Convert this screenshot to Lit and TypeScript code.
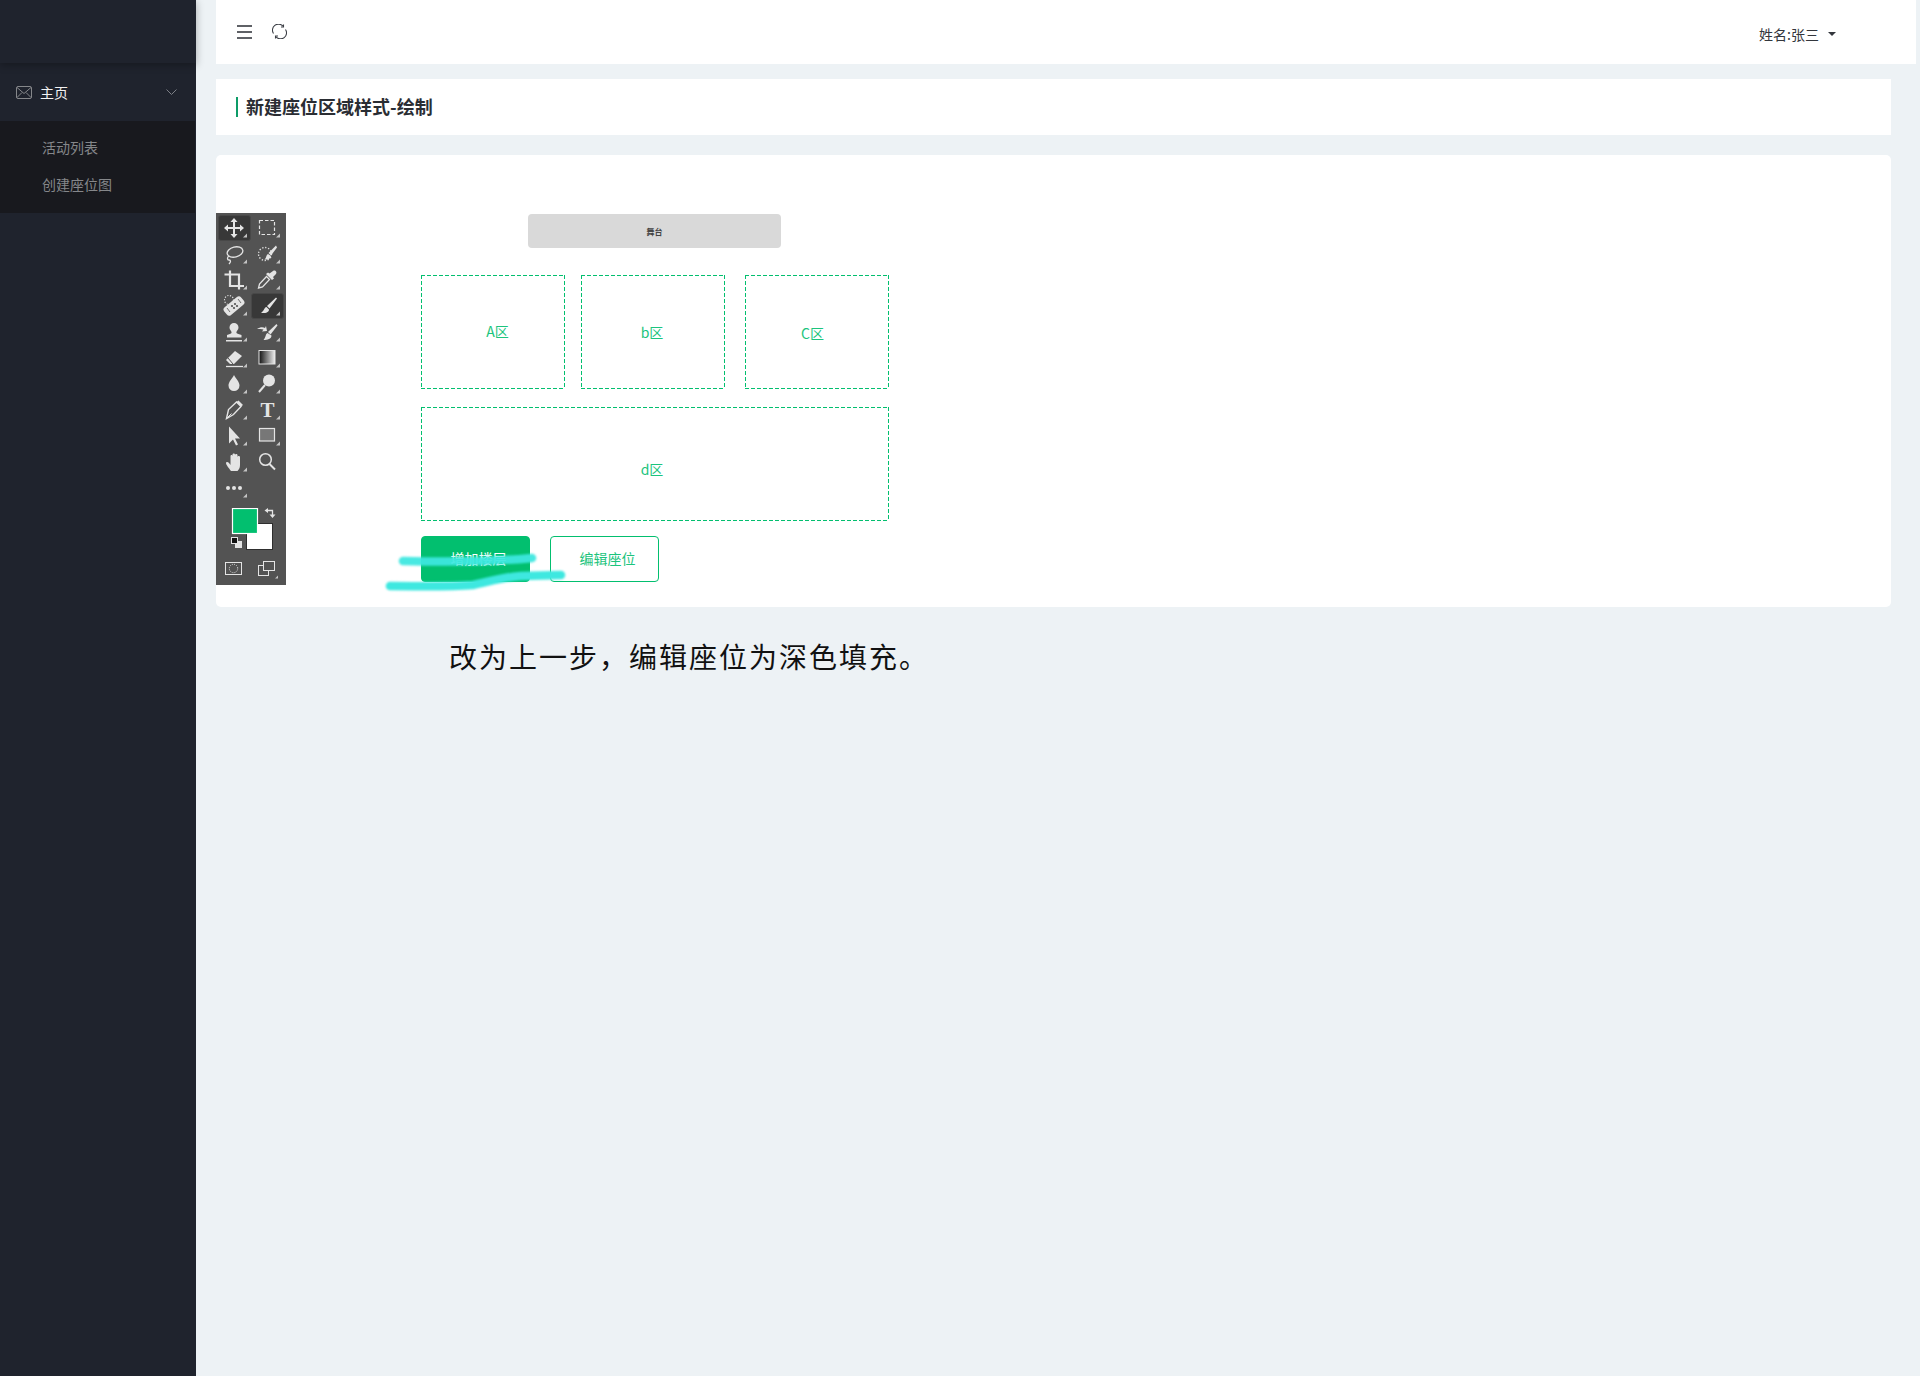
import { LitElement, html, css, svg } from 'lit';
import { customElement } from 'lit/decorators.js';

const INK = '#e4e4e4';
const corner = svg`<path d="M29 18.500v4h-4z" fill="#c4c4c4"/>`;

// tool icons, drawn in a 33x26 cell with the icon centred on 16,13
const tools = [
  { active: true, icon: svg`<path d="M16 5v16M8 13h16" stroke=${INK} stroke-width="2"/><path d="M16 3l3.500 4h-7zM16 23l3.500-4h-7zM6 13l4-3.500v7zM26 13l-4-3.500v7z" fill=${INK}/>${corner}` },
  { icon: svg`<rect x="8.500" y="5.500" width="15" height="14" fill="none" stroke=${INK} stroke-width="1.200" stroke-dasharray="3.500 2"/>${corner}` },
  { icon: svg`<ellipse cx="17" cy="11" rx="8" ry="5" transform="rotate(-14 17 11)" fill="none" stroke=${INK} stroke-width="1.300"/><path d="M11 15c-2 1-2 4 0 4s2 2 0 4" fill="none" stroke=${INK} stroke-width="1.300"/>${corner}` },
  { icon: svg`<circle cx="14" cy="13" r="6.500" fill="none" stroke=${INK} stroke-width="1.300" stroke-dasharray="1.300 1.700"/><path d="M25 4.500l-7.500 7.500 2.500 2.500 6-8z" fill=${INK}/><path d="M17 13c-2 1-1.500 4-3.500 5.500 3 .5 6-.5 6.500-3.500z" fill=${INK}/>${corner}` },
  { icon: svg`<path d="M12 3.500v15.500h14M6.500 7.500H21v15" fill="none" stroke=${INK} stroke-width="2.200"/>${corner}` },
  { icon: svg`<path d="M22 4c2-1.500 4.500 1 3 3l-3 3 1 1.500-2 1.500-6-6 2-1.500 1.500 1z" fill=${INK}/><path d="M15.500 9.500l-7 7.500-1 4 4-1 7-7.500z" fill="none" stroke=${INK} stroke-width="1.300"/>${corner}` },
  { icon: svg`<circle cx="11" cy="7" r="4.500" fill="none" stroke=${INK} stroke-width="1.100" stroke-dasharray="1.200 1.500"/><rect x="5" y="8" width="22" height="10" rx="3" transform="rotate(-40 16 13)" fill=${INK}/><g fill="#535353"><circle cx="14" cy="13" r="1.100"/><circle cx="17" cy="11" r="1.100"/><circle cx="16" cy="15" r="1.100"/><circle cx="19" cy="13" r="1.100"/><path d="M9 15l3 4M20 6l3 4" stroke="#535353" stroke-width=".8"/></g>${corner}` },
  { active: true, icon: svg`<path d="M25 4.500L16 13l2.500 2.500 7.500-10z" fill=${INK}/><path d="M15.500 14c-2.500 .5-2 3.500-5.500 6 4 .5 8-.5 8-3.500z" fill=${INK}/>${corner}` },
  { icon: svg`<g transform="translate(0 2)"><path d="M13.500 12c.5-2-2-3-2-5.500a4.500 4.500 0 0 1 9 0c0 2.500-2.500 3.500-2 5.500 .3 1 3 1 5 2v2.500H9V14c2-1 4.200-1 4.500-2z" fill=${INK}/><path d="M8 19h16v1.500H8z" fill=${INK}/></g>${corner}` },
  { icon: svg`<g transform="translate(0 1)"><path d="M25.500 4L17 12l2.500 2.500 7-9z" fill=${INK}/><path d="M16.500 13c-2 1-1.500 4-4 7 4 0 8-1 8-4.500z" fill=${INK}/><path d="M6 9c3-2 6-2 8-1l1-2 1 5-5 .5 1.500-2c-2-.5-4-.5-6.500-.5z" fill=${INK}/></g>${corner}` },
  { icon: svg`<path d="M8 15l9-9 7 5-8 8h-4z" fill=${INK}/><path d="M10 13l5 6" stroke="#535353" stroke-width="1"/><path d="M8 21.500h17" stroke=${INK} stroke-width="1.300"/>${corner}` },
  { icon: svg`<defs><linearGradient id="grad"><stop offset="0" stop-color="#111"/><stop offset="1" stop-color="#eee"/></linearGradient></defs><rect x="8" y="5.500" width="16" height="13.500" fill="url(#grad)" stroke=${INK}/>${corner}` },
  { icon: svg`<path d="M16 4c1.500 3.500 5.500 6.500 5.500 10.500a5.500 5.500 0 0 1-11 0C10.500 10.500 14.500 7.500 16 4z" fill=${INK}/>${corner}` },
  { icon: svg`<circle cx="18" cy="9.500" r="6" fill=${INK}/><path d="M14 14L8 21" stroke=${INK} stroke-width="2"/>${corner}` },
  { icon: svg`<path d="M8.500 21.500l2-9 8-7.500 4.500 4.500-7.500 8z" fill="none" stroke=${INK} stroke-width="1.400"/><path d="M18.500 5l2-1.500 4.500 4.500-2 1.500z" fill=${INK}/><path d="M8.500 21.500l5-5" stroke=${INK}/>${corner}` },
  { icon: svg`<text x="16.500" y="20" text-anchor="middle" font-family="'Liberation Serif', serif" font-size="21" font-weight="700" fill=${INK}>T</text>${corner}` },
  { icon: svg`<path d="M11 3.500v17l4-4 3 6 2-1-3-6h5z" fill=${INK}/>${corner}` },
  { icon: svg`<rect x="8.500" y="5.500" width="15" height="12.500" fill="#777" stroke=${INK} stroke-width="1.200"/>${corner}` },
  { icon: svg`<g transform="translate(3 0)"><path d="M10 22c-2-3-5-6-5-8 0-1.500 2-1.500 3 0l1.500 2V7c0-1.500 2-1.500 2 0v5V5.500c0-1.500 2.500-1.500 2.500 0V12V6c0-1.500 2.500-1.500 2.500 0v6.500V8c0-1.500 2.500-1.500 2.500 0v8c0 3-1 4.500-2.500 6z" fill=${INK}/></g>${corner}` },
  { icon: svg`<circle cx="14.500" cy="10.500" r="5.800" fill="none" stroke=${INK} stroke-width="1.500"/><path d="M18.500 15L24 20.500" stroke=${INK} stroke-width="2"/>` },
  { icon: svg`<circle cx="10" cy="13" r="2" fill=${INK}/><circle cx="16" cy="13" r="2" fill=${INK}/><circle cx="22" cy="13" r="2" fill=${INK}/>${corner}` },
];

const colorPanel = svg`<svg width="70" height="44" viewBox="0 0 70 44">
  <rect x="30.500" y="15.500" width="26" height="26" fill="#fff" stroke="#2e2e2e"/>
  <rect x="16.500" y="0.500" width="25" height="25" fill="#02bf6f" stroke="#fff" stroke-width="1.200"/>
  <path d="M51 2.500h5.500V7" fill="none" stroke="#e4e4e4" stroke-width="1.300"/>
  <path d="M52 0l-3.500 2.500L52 5zM53.500 6.500l3 3.500 3-3.500z" fill="#e4e4e4"/>
  <rect x="19" y="33" width="7" height="7" fill="#e4e4e4"/>
  <rect x="15.500" y="29.500" width="6" height="6" fill="#111" stroke="#e4e4e4"/>
</svg>`;

const modeRow = svg`<svg width="70" height="26" viewBox="0 0 70 26">
  <rect x="9.500" y="6.500" width="16" height="12" fill="none" stroke="#e4e4e4"/>
  <circle cx="17.500" cy="12.500" r="4.200" fill="none" stroke="#e4e4e4" stroke-dasharray="1 1.200"/>
  <rect x="42.500" y="9.500" width="10" height="10" fill="none" stroke="#e4e4e4"/>
  <rect x="47.500" y="5.500" width="11" height="9" fill="#535353" stroke="#e4e4e4"/>
  <path d="M62 19.500v3h-3z" fill="#c4c4c4"/>
</svg>`;

@customElement('app-root')
export class AppRoot extends LitElement {
  static styles = css`
    :host {
      display: flex;
      min-height: 1376px;
      background: #edf2f5;
      font-family: 'Noto Sans CJK SC', 'Noto Sans', sans-serif;
      font-size: 14px;
      color: #2b2e35;
    }

    .sidebar {
      width: 196px;
      flex: none;
      background: #1f232d;
    }

    .logo {
      height: 63px;
      box-shadow: 0 2px 8px rgba(0, 0, 0, 0.3);
    }

    .menu-head {
      height: 58px;
      padding: 0 19px 0 16px;
      display: flex;
      align-items: center;
      color: #f2f2f2;
    }

    .menu-head .label {
      margin-left: 8px;
      flex: 1;
    }

    .submenu {
      width: 195px;
      height: 92px;
      background: #18191e;
      color: #85878a;
      padding-top: 8px;
      box-sizing: border-box;
    }

    .submenu div {
      height: 37px;
      line-height: 37px;
      padding-left: 42px;
    }

    .main {
      flex: 1;
      padding-left: 20px;
      min-width: 0;
    }

    .topbar {
      height: 64px;
      margin-right: 4px;
      background: #fff;
      display: flex;
      align-items: center;
      padding: 0 0 0 21px;
    }

    .refresh {
      margin: -2px 0 0 20px;
    }

    .user {
      margin-left: auto;
      margin-right: 80px;
      display: flex;
      align-items: center;
      padding-top: 4px;
      color: #33363c;
    }

    .caret {
      margin-left: 9px;
      border: 4px solid transparent;
      border-top-color: #33363c;
      border-bottom: 0;
    }

    .title-bar {
      height: 56px;
      margin: 15px 29px 20px 0;
      background: #fff;
      display: flex;
      align-items: center;
      padding-left: 20px;
      font-size: 18px;
      font-weight: 700;
      color: #2a2d33;
    }

    .title-text {
      margin-top: -2px;
    }

    .title-bar::before {
      content: '';
      width: 2px;
      height: 20px;
      margin-right: 8px;
      background: #0d9c68;
    }

    .card {
      position: relative;
      height: 452px;
      box-sizing: border-box;
      margin-right: 29px;
      padding-top: 58px;
      background: #fff;
      border-radius: 5px;
      display: flex;
    }

    .toolbar {
      width: 70px;
      height: 372px;
      flex: none;
      box-sizing: border-box;
      padding-top: 2px;
      background: #535353;
    }

    .tools {
      display: grid;
      grid-template-columns: 33px 33px;
      grid-auto-rows: 26px;
      padding-left: 2px;
    }

    .tool {
      box-sizing: border-box;
      border-radius: 3px;
      border: 1px solid transparent;
    }

    .tool svg {
      display: block;
      margin: -1px;
    }

    .tool.active {
      background: #383838;
      border-color: #484848;
    }

    .colors {
      margin-top: 7px;
    }

    .colors svg,
    .modes svg {
      display: block;
    }

    .modes {
      margin-top: 4px;
    }

    .seats {
      margin-left: 135px;
      width: 468px;
      display: flex;
      flex-direction: column;
    }

    .stage {
      width: 253px;
      height: 34px;
      margin: 1px 0 27px 107px;
      background: #d9d9d9;
      border-radius: 4px;
      display: flex;
      align-items: center;
      justify-content: center;
      font-size: 8px;
      font-weight: 700;
      color: #444;
    }

    .zones {
      display: grid;
      grid-template-columns: 144px 144px 144px;
      grid-auto-rows: 114px;
      column-gap: 18px;
      row-gap: 18px;
    }

    /* long dashes, the border keyword only gives short ones at 1px */
    .zone {
      box-sizing: border-box;
      color: #1cc47d;
      display: flex;
      align-items: center;
      justify-content: center;
      --dash-x: repeating-linear-gradient(90deg, #02bf6f 0 4px, transparent 4px 6px);
      --dash-y: repeating-linear-gradient(180deg, #02bf6f 0 4px, transparent 4px 6px);
      background:
        var(--dash-x) left top / 100% 1px no-repeat,
        var(--dash-x) left bottom / 100% 1px no-repeat,
        var(--dash-y) left top / 1px 100% no-repeat,
        var(--dash-y) right top / 1px 100% no-repeat;
    }

    .zone.a { padding: 0 0 3px 9px; }
    .zone.b { margin-left: -2px; margin-right: 2px; padding: 0 2px 1px 0; }
    .zone.c { padding: 1px 9px 0 0; }
    .zone.d { grid-column: 1 / 4; padding: 10px 6px 0 0; }

    .actions {
      display: flex;
      gap: 20px;
      margin-top: 15px;
    }

    .btn {
      width: 109px;
      height: 46px;
      box-sizing: border-box;
      border: 1px solid #02bf6f;
      border-radius: 4px;
      padding: 0 0 2px 6px;
      background: #fff;
      color: #1cc47d;
      font: inherit;
    }

    .btn.primary {
      background: #02bf6f;
      color: #fff;
    }

    .scribble {
      position: absolute;
      left: 160px;
      top: 390px;
      filter: blur(0.8px);
      pointer-events: none;
    }

    .note {
      margin: 27px 0 0 233px;
      font-size: 28px;
      letter-spacing: 2px;
      line-height: 44px;
      color: #111;
    }
  `;

  render() {
    return html`
      <aside class="sidebar">
        <div class="logo"></div>
        <div class="menu-head">
          <svg width="16" height="13" viewBox="0 0 16 13" fill="none" stroke="#85878a">
            <rect x="0.500" y="0.500" width="15" height="12" rx="1.500"/>
            <path d="M1 1.500l7 6 7-6M1 11.500l5-5M15 11.500l-5-5"/>
          </svg>
          <span class="label">主页</span>
          <svg width="11" height="6" viewBox="0 0 11 6" fill="none" stroke="#7d8087">
            <path d="M.5 .5l5 5 5-5"/>
          </svg>
        </div>
        <div class="submenu">
          <div>活动列表</div>
          <div>创建座位图</div>
        </div>
      </aside>
      <main class="main">
        <header class="topbar">
          <svg width="15" height="14" viewBox="0 0 15 14" stroke="#2b2e35" stroke-width="1.600">
            <path d="M0 1h15M0 7h15M0 13h15"/>
          </svg>
          <svg class="refresh" width="15" height="15" viewBox="0 0 15 15" fill="none" stroke="#3b3e45" stroke-width="1.100">
            <path d="M1.500 9.500A6 6 0 0 1 11 2.200M13.500 5.500A6 6 0 0 1 4 12.800"/>
            <path d="M11.500 .5v2.500H9M3.500 14.500V12H6"/>
          </svg>
          <div class="user">姓名:张三<span class="caret"></span></div>
        </header>
        <div class="title-bar"><span class="title-text">新建座位区域样式-绘制</span></div>
        <section class="card">
          <div class="toolbar">
            <div class="tools">
              ${tools.map(
                (t) => html`<div class="tool ${t.active ? 'active' : ''}">
                  <svg width="33" height="26" viewBox="0 0 33 26">${t.icon}</svg>
                </div>`
              )}
            </div>
            <div class="colors">${colorPanel}</div>
            <div class="modes">${modeRow}</div>
          </div>
          <div class="seats">
            <div class="stage">舞台</div>
            <div class="zones">
              <div class="zone a">A区</div>
              <div class="zone b">b区</div>
              <div class="zone c">C区</div>
              <div class="zone d">d区</div>
            </div>
            <div class="actions">
              <button class="btn primary">增加楼层</button>
              <button class="btn">编辑座位</button>
            </div>
          </div>
          <svg class="scribble" width="200" height="70" viewBox="0 0 200 70" fill="none" stroke="#3ee8e0" stroke-width="8.500" stroke-linecap="round" stroke-linejoin="round">
            <path d="M27 16c40 1 90 1 129-3" opacity="0.94"/>
            <path d="M14 41c30 0 55 1 83-1 15-3 30-8 48-9l40-1"/>
          </svg>
        </section>
        <p class="note">改为上一步，编辑座位为深色填充。</p>
      </main>
    `;
  }
}
